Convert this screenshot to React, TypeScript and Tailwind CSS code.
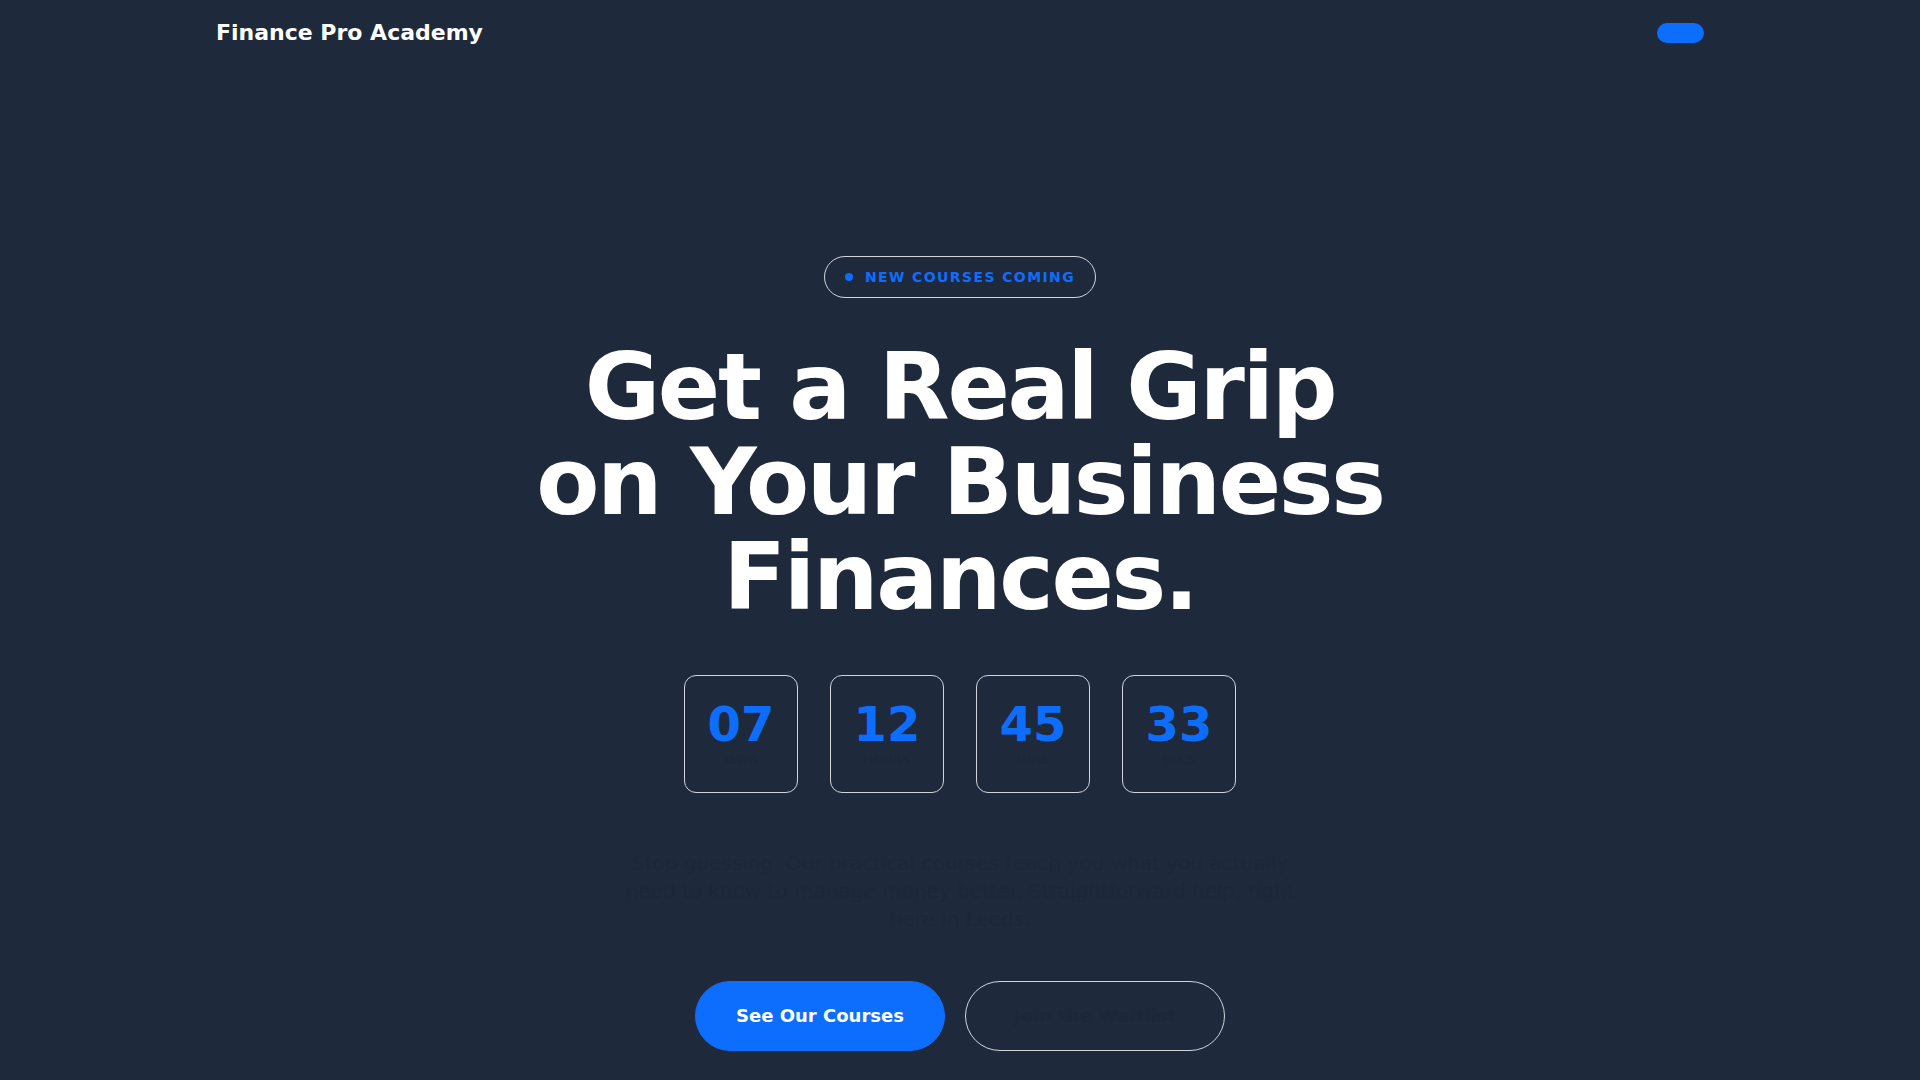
import React from 'react';

const COUNTDOWN = [
  { value: '07', label: 'Days' },
  { value: '12', label: 'Hours' },
  { value: '45', label: 'Mins' },
  { value: '33', label: 'Secs' },
];

export default function App() {
  return (
    <div className="min-h-screen bg-[#1e293b] font-['DejaVu_Sans',sans-serif] text-white">
      <header className="mx-auto flex max-w-[1536px] items-center justify-between px-6 py-4">
        <span className="text-[22px] font-bold leading-[33px] text-white">Finance Pro Academy</span>
        <button type="button" className="h-5 w-[47px] rounded-full bg-[#0d6efd]" aria-label="Menu" />
      </header>

      <main className="mx-auto flex max-w-[1536px] flex-col items-center px-6 pb-8 pt-[191px] text-center">
        <div className="inline-flex items-center gap-3 rounded-full border border-[#d1d5db] px-5 py-2.5">
          <span className="h-2 w-2 rounded-full bg-[#0d6efd]" />
          <span className="text-sm font-bold uppercase leading-5 tracking-widest text-[#0d6efd]">
            New Courses Coming
          </span>
        </div>

        <h1 className="mx-auto mt-[42px] max-w-[880px] text-[92px] font-bold leading-[95px] tracking-tight text-white">
          Get a Real Grip on Your Business Finances.
        </h1>

        <div className="mt-[50px] flex gap-8">
          {COUNTDOWN.map((c) => (
            <div
              key={c.label}
              className="flex w-[114px] flex-col items-center rounded-xl border border-[#d1d5db] py-6"
            >
              <span className="text-5xl font-bold leading-none text-[#0d6efd]">{c.value}</span>
              <span className="mt-1 text-xs uppercase leading-4 tracking-wider text-[#1c2739]">
                {c.label}
              </span>
            </div>
          ))}
        </div>

        <p className="mx-auto mt-14 max-w-2xl text-xl leading-7 text-[#1c2739]">
          Stop guessing. Our practical courses teach you what you actually need to know to manage
          money better. Straightforward help, right here in Leeds.
        </p>

        <div className="mt-12 flex gap-5">
          <button
            type="button"
            className="rounded-full border border-[#0d6efd] bg-[#0d6efd] px-10 py-5 text-lg font-bold leading-7 text-white"
          >
            See Our Courses
          </button>
          <button
            type="button"
            className="rounded-full border border-[#d1d5db] px-12 py-5 text-lg font-bold leading-7 text-[#1c2739]"
          >
            Join the Waitlist
          </button>
        </div>
      </main>
    </div>
  );
}
